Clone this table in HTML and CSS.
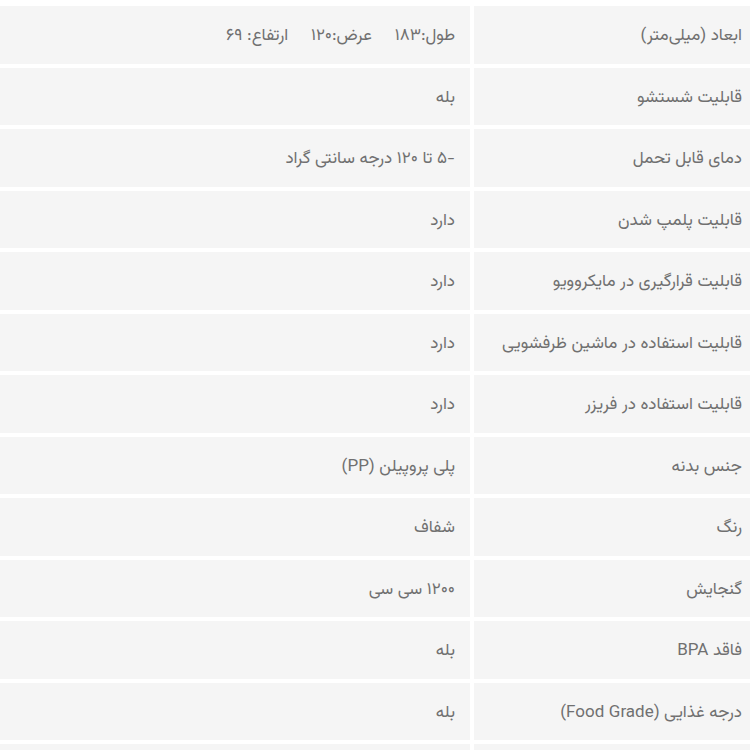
FILE: index.html
```html
<!DOCTYPE html>
<html lang="fa" dir="rtl">
<head>
<meta charset="utf-8">
<link rel="stylesheet" href="styles.css">
</head>
<body>
<div class="specs">
  <div class="row"><div class="label">ابعاد (میلی‌متر)</div><div class="value">طول:۱۸۳&nbsp;&nbsp;&nbsp;&nbsp; عرض:۱۲۰&nbsp;&nbsp;&nbsp;&nbsp; ارتفاع: ۶۹</div></div>
  <div class="row"><div class="label">قابلیت شستشو</div><div class="value">بله</div></div>
  <div class="row"><div class="label">دمای قابل تحمل</div><div class="value">-۵ تا ۱۲۰ درجه سانتی گراد</div></div>
  <div class="row"><div class="label">قابلیت پلمپ شدن</div><div class="value">دارد</div></div>
  <div class="row"><div class="label">قابلیت قرارگیری در مایکروویو</div><div class="value">دارد</div></div>
  <div class="row"><div class="label">قابلیت استفاده در ماشین ظرفشویی</div><div class="value">دارد</div></div>
  <div class="row"><div class="label">قابلیت استفاده در فریزر</div><div class="value">دارد</div></div>
  <div class="row"><div class="label">جنس بدنه</div><div class="value">پلی پروپیلن (PP)</div></div>
  <div class="row"><div class="label">رنگ</div><div class="value">شفاف</div></div>
  <div class="row"><div class="label">گنجایش</div><div class="value">۱۲۰۰ سی سی</div></div>
  <div class="row"><div class="label">فاقد BPA</div><div class="value">بله</div></div>
  <div class="row"><div class="label">درجه غذایی (Food Grade)</div><div class="value">بله</div></div>
  <div class="row"><div class="label"></div><div class="value"></div></div>
</div>
</body>
</html>
```

FILE: styles.css
```css
html, body {
  margin: 0;
  padding: 0;
  background: #ffffff;
  overflow: hidden;
}
body {
  font-family: "Vazirmatn", "DejaVu Sans", "Noto Sans", sans-serif;
  font-size: 17px;
  color: #707070;
}
.specs {
  display: flex;
  flex-direction: column;
  gap: 4px;
  padding-top: 6px;
  width: 750px;
}
.row {
  display: grid;
  grid-template-columns: 276px 470px;
  column-gap: 4px;
  height: 57.5px;
  flex: none;
}
.label, .value {
  background: #f5f5f5;
  display: flex;
  align-items: center;
  padding-top: 3px;
  white-space: nowrap;
}
.label {
  padding-right: 8px;
}
.value {
  padding-right: 15px;
}
```
